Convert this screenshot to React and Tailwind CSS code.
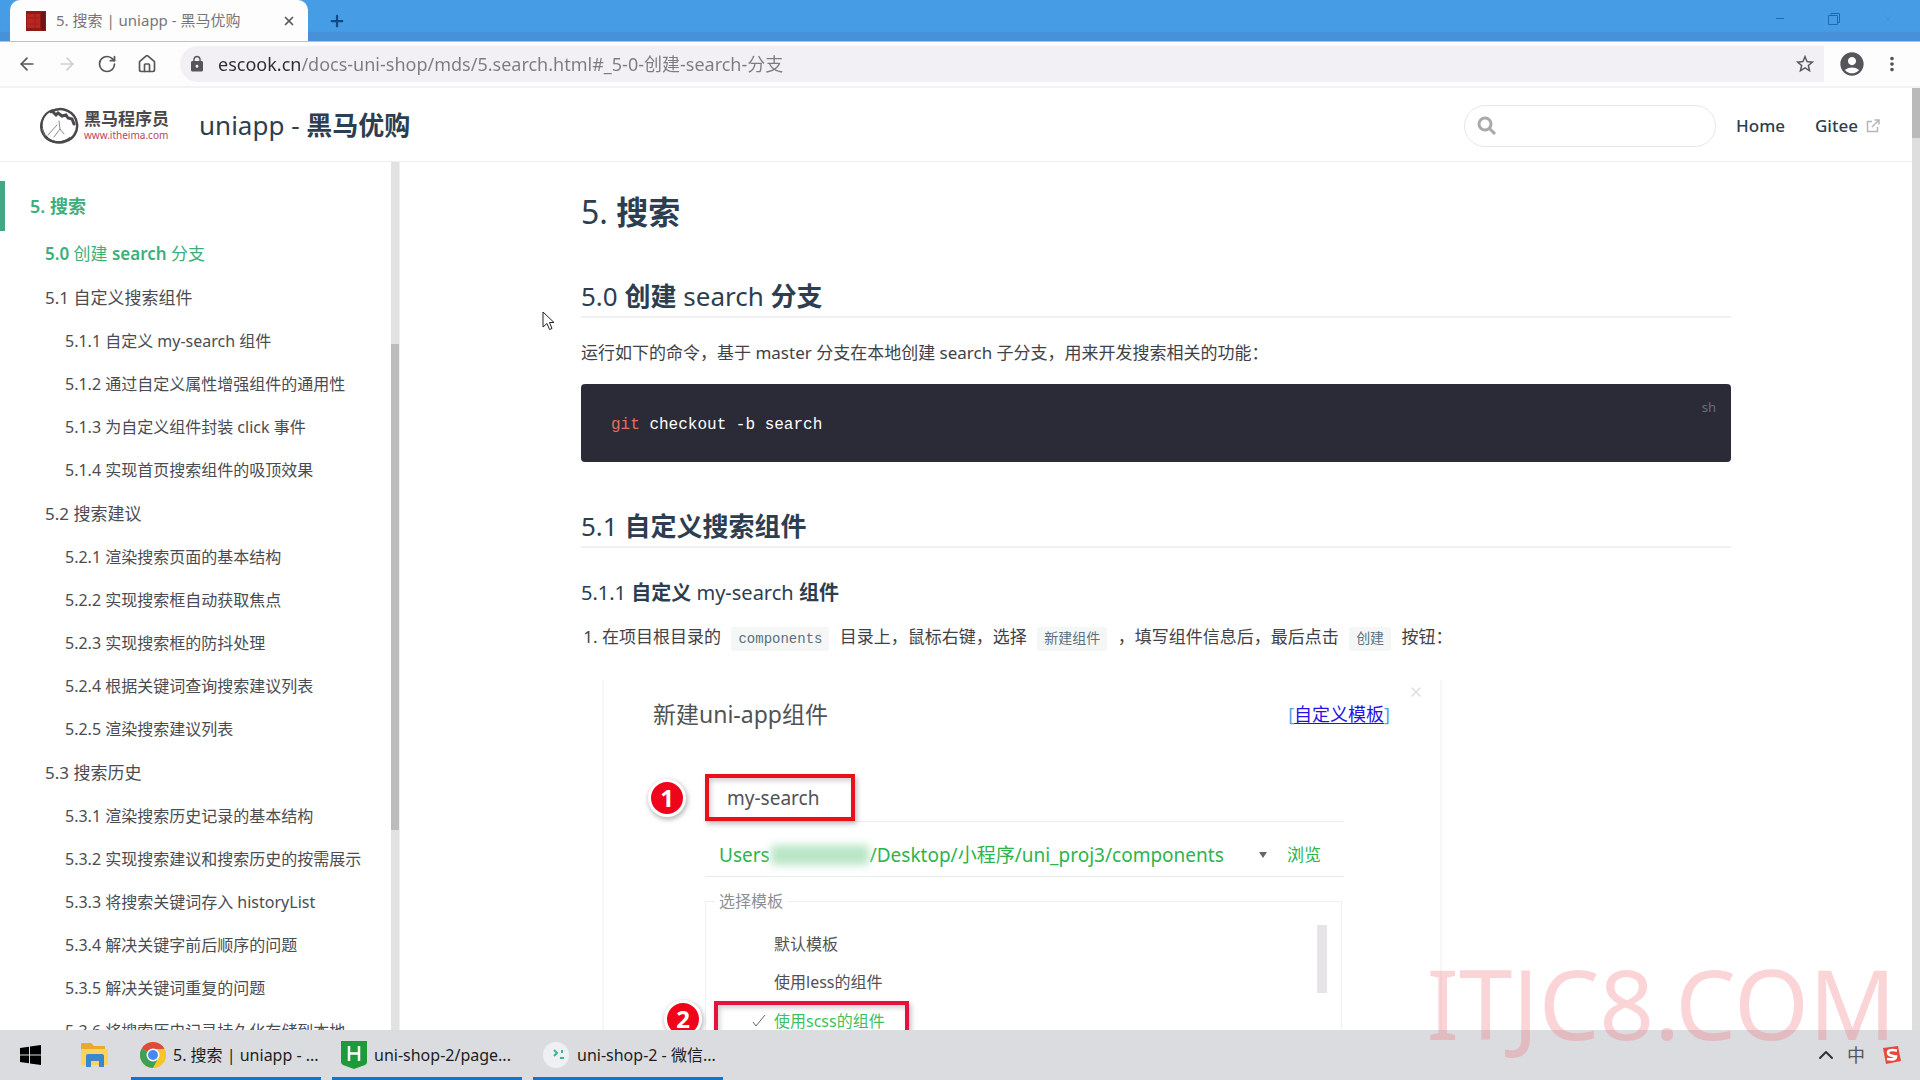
import { LuArrowLeft, LuArrowRight, LuRotateCw, LuHouse, LuPlus, LuX, LuChevronUp } from 'react-icons/lu'
import { MdLock, MdStarBorder, MdAccountCircle, MdMoreVert } from 'react-icons/md'

const SECTIONS = [
  { title: '5.0 创建 search 分支', active: true, items: [] },
  {
    title: '5.1 自定义搜索组件',
    items: [
      '5.1.1 自定义 my-search 组件',
      '5.1.2 通过自定义属性增强组件的通用性',
      '5.1.3 为自定义组件封装 click 事件',
      '5.1.4 实现首页搜索组件的吸顶效果',
    ],
  },
  {
    title: '5.2 搜索建议',
    items: [
      '5.2.1 渲染搜索页面的基本结构',
      '5.2.2 实现搜索框自动获取焦点',
      '5.2.3 实现搜索框的防抖处理',
      '5.2.4 根据关键词查询搜索建议列表',
      '5.2.5 渲染搜索建议列表',
    ],
  },
  {
    title: '5.3 搜索历史',
    items: [
      '5.3.1 渲染搜索历史记录的基本结构',
      '5.3.2 实现搜索建议和搜索历史的按需展示',
      '5.3.3 将搜索关键词存入 historyList',
      '5.3.4 解决关键字前后顺序的问题',
      '5.3.5 解决关键词重复的问题',
      '5.3.6 将搜索历史记录持久化存储到本地',
    ],
  },
]

// Latin runs are set lighter than the Chinese around them
function Mixed({ text, latin = 'font-normal', cjk = 'font-bold' }) {
  return text.split(/([\u4e00-\u9fff]+)/).map((part, i) => (
    <span key={i} className={i % 2 ? cjk : latin}>{part}</span>
  ))
}

function TitleBar() {
  return (
    <div className="flex h-[42px] shrink-0 items-stretch border-b border-[#8fd0f0] bg-linear-to-b from-[#469de5] from-75% to-[#4791d8] to-80% pl-[10px]">
      <div className="flex w-[298px] items-center rounded-t-[10px] bg-[#fdfdfe] pl-4 pr-3">
        <FavIcon />
        <span className="ml-[10px] flex-1 whitespace-nowrap text-[15px] text-[#77757a]">5. 搜索 | uniapp - 黑马优购</span>
        <button type="button" aria-label="Close tab" className="text-[#5a5a5e]"><LuX size={14} strokeWidth={3} /></button>
      </div>
      <button type="button" aria-label="New tab" className="ml-5 text-[#0f4a86]"><LuPlus size={18} strokeWidth={3} /></button>
      <div className="ml-auto flex items-center gap-10 pb-1 pr-[25px] text-[#1e6cb0]">
        <button type="button" aria-label="Minimize">
          <svg width="14" height="14" viewBox="0 0 14 14" stroke="currentColor"><path d="M3 6.5h8" /></svg>
        </button>
        <button type="button" aria-label="Restore">
          <svg width="14" height="14" viewBox="0 0 14 14" fill="none" stroke="currentColor"><path d="M1.5 3.5h9v9h-9zM4 3.500v-2h8.500v9h-2" /></svg>
        </button>
        <button type="button" aria-label="Close window" className="text-[#4593dd]">
          <svg width="14" height="14" viewBox="0 0 14 14" stroke="currentColor"><path d="M3 3l8 8M11 3l-8 8" /></svg>
        </button>
      </div>
    </div>
  )
}

function FavIcon() {
  return (
    <svg width="20" height="20" viewBox="0 0 20 20">
      <rect width="20" height="20" fill="#8c1a18" />
      <rect x="1" y="3" width="13" height="14" fill="#b92620" />
      <rect x="15" y="1" width="4" height="18" fill="#6f1414" />
      <path d="M2 7h11M2 13h11M9 3v14" stroke="#a01f1b" />
    </svg>
  )
}

function Toolbar() {
  return (
    <div className="flex h-[46px] shrink-0 items-center border-b-2 border-[#f2f2f6] bg-[#fdfdfe] px-[17px] text-[#55555a]">
      <div className="flex w-[163px] items-center gap-5">
        <button type="button" aria-label="Back"><LuArrowLeft size={20} /></button>
        <button type="button" aria-label="Forward" className="text-[#cfcfd3]"><LuArrowRight size={20} /></button>
        <button type="button" aria-label="Reload"><LuRotateCw size={20} /></button>
        <button type="button" aria-label="Home"><LuHouse size={20} /></button>
      </div>
      <div className="flex h-9 flex-1 items-center rounded-l-[18px] bg-[#f2f0f4] pl-[8px] pr-2">
        <MdLock size={18} />
        <input
          type="text"
          aria-label="Address"
          defaultValue="escook.cn/docs-uni-shop/mds/5.search.html#_5-0-创建-search-分支"
          className="ml-3 min-w-0 flex-1 bg-[linear-gradient(90deg,#2d2b30_82px,#7d7a80_82px)] bg-clip-text text-[18px] leading-9 text-transparent outline-none"
        />
        <button type="button" aria-label="Bookmark"><MdStarBorder size={22} /></button>
      </div>
      <div className="ml-[14px] flex items-center gap-[15px]">
        <button type="button" aria-label="Profile"><MdAccountCircle size={28} /></button>
        <button type="button" aria-label="Menu"><MdMoreVert size={22} /></button>
      </div>
    </div>
  )
}

function SiteHeader() {
  return (
    <header className="flex h-[74px] shrink-0 items-center border-b border-[#eeeef1] bg-white pl-[39px] pr-8 pt-[2px] text-[#2c3e50]">
      <a href="#home" className="flex items-center">
        <svg width="40" height="38" viewBox="0 0 40 38" fill="none" stroke="#4a484b" strokeLinecap="round">
          <path d="M14 3C4 6-1 18 4 27c5 9 18 11 27 4" strokeWidth="2" />
          <path d="M8 6C1 13 2 24 8 30" strokeWidth="1" />
          <path d="M12 5C23-2 37 5 38 17c1 8-4 15-11 17-7 3-16 1-20-4" strokeWidth="2.500" />
          <path d="M14 5l3 3 2-2 4 3 4-1 2 3 4 1 2 5" strokeWidth="3" />
          <path d="M20 14l1 8-6 8M21 22l4 5M9 28l9-10" strokeWidth="1" stroke="#8b898c" />
        </svg>
        <span className="ml-[5px] flex w-[88px] flex-col">
          <span className="text-[17px] font-bold leading-[19px] text-[#4a484b]">黑马程序员</span>
          <span className="text-[10px] leading-[15px] text-[#b8455c]">www.itheima.com</span>
        </span>
      </a>
      <span className="ml-[27px] whitespace-nowrap text-[26px]"><Mixed text="uniapp - 黑马优购" /></span>
      <div className="ml-auto flex h-[42px] w-[252px] items-center rounded-full border border-[#e4e7ec] px-3">
        <svg width="20" height="20" viewBox="0 0 20 20" fill="none" stroke="#a9a9ad" strokeWidth="3"><circle cx="8" cy="8" r="6" /><path d="M12 12l6 6" /></svg>
        <input type="text" aria-label="Search" className="min-w-0 flex-1 bg-transparent pl-2 outline-none" />
      </div>
      <nav className="ml-5 flex items-center gap-[30px] text-[17px] font-medium">
        <a href="#home">Home</a>
        <a href="#gitee" className="flex items-center gap-2">
          Gitee
          <svg width="14" height="14" viewBox="0 0 14 14" fill="none" stroke="#b5b5ba"><path d="M6 2.500H1.500v10h10V8M8.500 1h4.500v4.500M13 1L6 8" strokeWidth="1.500" /></svg>
        </a>
      </nav>
    </header>
  )
}

function Sidebar() {
  return (
    <aside className="flex w-[400px] shrink-0 border-r border-[#efeff1] text-[#4a4c52]">
      <nav className="min-w-0 flex-1 overflow-hidden whitespace-nowrap pt-[19px]">
        <a href="#5" className="flex h-[50px] items-center border-l-[5px] border-[#41a784] pl-[25px] text-[18px] text-[#3eaf7c]">
          <span><Mixed text="5. 搜索" latin="font-semibold" /></span>
        </a>
        <div className="pt-px">
          {SECTIONS.map(section => (
            <div key={section.title}>
              <a
                href={`#${section.title.slice(0, 3)}`}
                className={`flex h-11 items-center pl-[45px] text-[17px] ${section.active ? 'text-[#3eaf7c]' : ''}`}
              >
                <span className="whitespace-pre">
                  {section.active ? <Mixed text={section.title} latin="font-semibold" cjk="font-normal" /> : section.title}
                </span>
              </a>
              {section.items.map(item => (
                <a key={item} href={`#${item.slice(0, 5)}`} className="flex h-[43px] items-center pb-px pl-[65px] text-[16px]">{item}</a>
              ))}
            </div>
          ))}
        </div>
      </nav>
      <div className="w-2 bg-[#e2e2e3]">
        <div className="h-[21%]" />
        <div className="h-[56%] bg-[#bcbcbd]" />
      </div>
    </aside>
  )
}

function Heading({ text }) {
  return (
    <h2 className="mt-[46px] whitespace-pre border-b-2 border-[#f1f1f3] pb-[2px] text-[26px] leading-9"><Mixed text={text} /></h2>
  )
}

function Code({ children }) {
  return (
    <code className="mx-[6px] rounded-[3px] bg-[#f5f7f7] px-[7px] py-1 font-['Liberation_Mono','Noto_Sans_CJK_SC',monospace] text-[14px] text-[#5b6f80]">{children}</code>
  )
}

function Badge({ children }) {
  return (
    <span className="flex size-[38px] shrink-0 items-center justify-center rounded-full border-[3px] border-white bg-[#f0041c] text-[24px] font-bold text-white shadow-[1px_2px_4px_1px_#8888]">{children}</span>
  )
}

// The HBuilderX "new component" dialog shown as a figure in the article
function ComponentDialog() {
  return (
    <figure className="relative ml-[21px] mt-[26px] w-[840px] border-x-2 border-[#f7f7f8] pt-[18px] text-[#505254]">
      <button type="button" aria-label="Close" className="absolute right-4 top-1 text-[#dedee0]"><LuX size={16} /></button>
      <div className="flex h-8 items-center justify-between pl-[49px] pr-[50px]">
        <h4 className="text-[23px]">新建uni-app组件</h4>
        <span className="text-[18px] text-[#5aa0e0]">[<a href="#template" className="text-[#2a10e8] underline underline-offset-2">自定义模板</a>]</span>
      </div>
      <div className="mt-11 flex items-center pl-[44px] pr-[96px]">
        <Badge>1</Badge>
        <div className="ml-[19px] flex-1 border-b border-[#ececee]">
          <input
            type="text"
            aria-label="组件名称"
            defaultValue="my-search"
            className="block h-[47px] w-[150px] border-4 border-[#e8101c] bg-transparent px-[18px] text-[19px] shadow-[2px_3px_5px_#8888,inset_2px_3px_5px_#aaa8] outline-none"
          />
        </div>
      </div>
      <div className="ml-[101px] mr-[96px] flex h-[55px] items-center border-b border-[#e6eeec] pl-[14px] pt-3 text-[19px] text-[#2fb34d]">
        <span>Users</span>
        <span className="mx-px h-5 w-[98px] bg-[#b9e6c6] blur-[4px]" />
        <span className="whitespace-nowrap">/Desktop/小程序/uni_proj3/components</span>
        <button type="button" aria-label="展开" className="ml-auto">
          <svg width="8" height="6" viewBox="0 0 8 6" fill="#666"><path d="M0 0h8L4 6z" /></svg>
        </button>
        <button type="button" className="ml-5 mr-[23px] text-[17px]">浏览</button>
      </div>
      <fieldset className="ml-[101px] mr-[98px] mt-3 border border-[#f0eef1]">
        <legend className="ml-[9px] px-1 text-[16px] leading-6 text-[#8d8f92]">选择模板</legend>
        <div className="flex justify-between pr-[14px] pt-3">
          <ul className="text-[16px]">
            <li className="flex h-[38px] items-center pl-[68px]">默认模板</li>
            <li className="flex h-[38px] items-center pl-[68px]">使用less的组件</li>
            <li className="ml-2 flex h-10 w-[195px] items-center border-4 border-[#e3143c] pl-[34px] text-[#3fbf62] shadow-[2px_3px_5px_#8888,inset_2px_3px_5px_#aaa8]">
              <svg width="14" height="14" viewBox="0 0 14 14" fill="none" stroke="#666"><path d="M1 8l3 4 9-11" /></svg>
              <span className="ml-2 whitespace-nowrap">使用scss的组件</span>
            </li>
          </ul>
          <div className="h-[68px] w-[10px] bg-[#e6e4e6]" />
        </div>
      </fieldset>
      <div className="absolute bottom-1 left-[60px]"><Badge>2</Badge></div>
    </figure>
  )
}

function Article() {
  return (
    <main className="min-w-0 flex-1 overflow-hidden text-[#2c3e50]">
      <div className="mx-auto max-w-[1150px] pt-[30px] text-[17px] leading-[30px]">
        <h1 className="whitespace-pre text-[32px] leading-10"><Mixed text="5. 搜索" /></h1>
        <Heading text="5.0 创建 search 分支" />
        <p className="mt-5 text-[#3f4248]">运行如下的命令，基于 master 分支在本地创建 search 子分支，用来开发搜索相关的功能：</p>
        <div className="mt-4 flex items-start justify-between rounded-[4px] bg-[#2a2b37] pl-[30px] pr-[15px]">
          <pre className="pb-[22px] pt-[26px] font-['Liberation_Mono',monospace] text-[16px] leading-[30px] text-white"><span className="text-[#e0705f]">git</span> checkout -b search</pre>
          <span className="pt-2 text-[13px] text-[#6c6e7b]">sh</span>
        </div>
        <Heading text="5.1 自定义搜索组件" />
        <h3 className="mt-[30px] whitespace-pre text-[20px]"><Mixed text="5.1.1 自定义 my-search 组件" /></h3>
        <ol className="mt-[14px] list-decimal pl-[21px] text-[#3f4248]">
          <li>
            在项目根目录的 <Code>components</Code> 目录上，鼠标右键，选择 <Code>新建组件</Code> ，填写组件信息后，最后点击 <Code>创建</Code> 按钮：
          </li>
        </ol>
        <ComponentDialog />
      </div>
    </main>
  )
}

function ChromeIcon() {
  return (
    <svg className="shrink-0" width="26" height="26" viewBox="0 0 26 26">
      <circle cx="13" cy="13" r="13" fill="#f6c52c" />
      <path d="M13 13L1.740 6.500A13 13 0 0 1 24.260 6.500z" fill="#dd4b3c" />
      <path d="M1.740 6.500A13 13 0 0 0 13 26L18.500 16 13 13z" fill="#3f9f58" />
      <path d="M13 7h11.500A13 13 0 0 1 13 26l5.500-10z" fill="#f6c52c" />
      <circle cx="13" cy="13" r="6.500" fill="#fff" />
      <circle cx="13" cy="13" r="5" fill="#4688f0" />
    </svg>
  )
}

function HBuilderIcon() {
  return (
    <svg className="shrink-0" width="26" height="28" viewBox="0 0 26 28">
      <path d="M0 0h26v21q0 2-2 3l-11 4-11-4q-2-1-2-3z" fill="#1f9a38" />
      <path d="M8 5v15M18 5v15M8 12.500h10" fill="none" stroke="#fff" strokeWidth="2.500" />
    </svg>
  )
}

function WxIcon() {
  return (
    <svg className="shrink-0" width="28" height="28" viewBox="0 0 28 28">
      <circle cx="14" cy="14" r="13" fill="#eef0f1" />
      <path d="M12 9l3 3-3 3M18 17h4M20 9v3" fill="none" stroke="#3fb492" strokeWidth="2" />
    </svg>
  )
}

function TaskButton({ icon, children }) {
  return (
    <button type="button" className="flex h-full w-[190px] items-center gap-[7px] border-b-[3px] border-[#1273d0] pl-[9px] pt-[3px] text-left text-[16px] whitespace-nowrap text-[#1c1c1e]">
      {icon}
      {children}
    </button>
  )
}

function Taskbar() {
  return (
    <footer className="flex h-[50px] shrink-0 items-center bg-[#dbdce0] pl-5">
      <button type="button" aria-label="Start">
        <svg width="21" height="20" viewBox="0 0 21 20"><path d="M0 3l9-1.300V9.500H0zM10 1.500L21 0v9.500H10zM0 10.500h9v7.800L0 17zM10 10.500h11V20l-11-1.500z" /></svg>
      </button>
      <button type="button" aria-label="File Explorer" className="ml-10">
        <svg width="27" height="24" viewBox="0 0 27 24">
          <path d="M0 1q0-1 1-1h9l3 3h11v6H0z" fill="#e8a92c" />
          <path d="M0 6h27v16H0z" fill="#fbd45f" />
          <path d="M5 24V13q0-2 2-2h14q2 0 2 2v11h-5v-6h-8v6z" fill="#3b86cf" />
        </svg>
      </button>
      <div className="ml-[23px] flex h-full gap-[11px]">
        <TaskButton icon={<ChromeIcon />}>5. 搜索 | uniapp - ...</TaskButton>
        <TaskButton icon={<HBuilderIcon />}>uni-shop-2/page...</TaskButton>
        <TaskButton icon={<WxIcon />}>uni-shop-2 - 微信...</TaskButton>
      </div>
      <div className="ml-auto flex h-9 items-center gap-[9px] pr-[18px]">
        <button type="button" aria-label="Show hidden icons" className="text-[#333]"><LuChevronUp size={24} strokeWidth={2} /></button>
        <button type="button" className="text-[18px] text-[#55565a]">中</button>
        <svg className="ml-2" width="20" height="20" viewBox="0 0 20 20">
          <path d="M1 3l15-2 3 15-15 3z" fill="#e5493a" />
          <path d="M15 5.500Q6 4 6 7.500T14 11.500Q14 15.500 5 14" fill="none" stroke="#fff" strokeWidth="2.600" />
        </svg>
      </div>
    </footer>
  )
}

export default function App() {
  return (
    <div className="relative flex h-screen flex-col overflow-hidden bg-white font-['Noto_Sans','Noto_Sans_CJK_SC',sans-serif]" lang="zh-CN">
      <TitleBar />
      <Toolbar />
      <div className="flex min-h-0 flex-1">
        <div className="flex min-w-0 flex-1 flex-col">
          <SiteHeader />
          <div className="flex min-h-0 flex-1">
            <Sidebar />
            <Article />
          </div>
        </div>
        <div className="w-2 bg-[#dededf]">
          <div className="h-[50px] bg-[#bababb]" />
        </div>
      </div>
      <Taskbar />

      <svg className="absolute left-[542px] top-[311px]" width="13" height="20" viewBox="0 0 13 20">
        <path d="M1 1v15l4-3.500 2.500 6 2.500-1-2.500-6H12z" fill="#fff" stroke="#222" />
      </svg>
      <div className="pointer-events-none absolute bottom-8 right-6 text-[96px] leading-[90px] text-[#f2707c]/30">ITJC8.COM</div>
    </div>
  )
}
